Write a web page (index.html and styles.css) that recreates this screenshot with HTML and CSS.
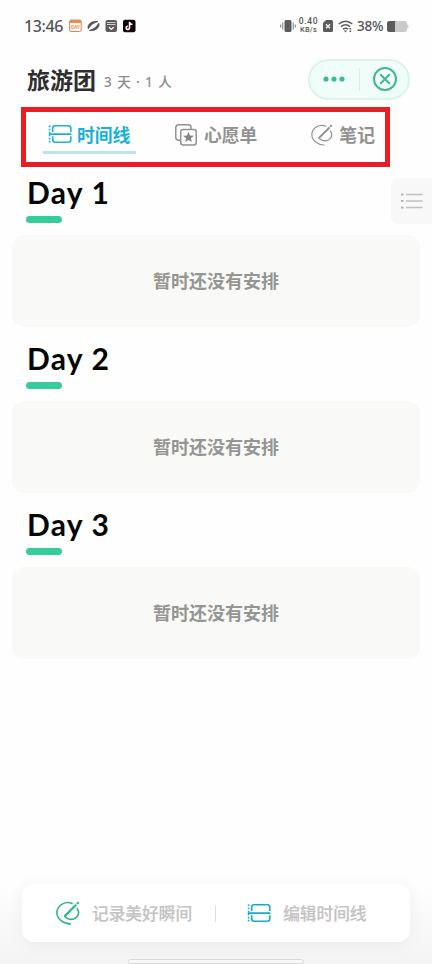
FILE: index.html
```html
<!DOCTYPE html>
<html lang="zh-CN">
<head>
<meta charset="utf-8">
<title>旅游团</title>
<link rel="stylesheet" href="styles.css">
</head>
<body>
<svg class="defs" width="0" height="0">
  <symbol id="timeline" viewBox="0 0 24 18">
    <g fill="none" stroke="currentColor" stroke-width="1.6">
      <path d="M4.700 7V3.200Q4.700.8 7.100.8h13.300q2.400 0 2.400 2.400V7M4.700 11.200v3.600q0 2.400 2.400 2.400h13.300q2.400 0 2.400-2.400v-3.600M.8 9.100h22.700"/>
      <path d="M1.600.6v16.800" stroke-width="1.600" stroke-dasharray="1.600 1.450"/>
    </g>
  </symbol>
  <symbol id="note" viewBox="0 0 24 24">
    <g fill="none" stroke="currentColor" stroke-linecap="round">
      <path d="M16.100 2.400C9.800-.2 1.100 3.800.9 11.500.8 18 7.600 22.900 14.300 22.900M21.200 7.600C25.800 15.200 17 21.600 9.600 16.300"/>
      <path d="M8.800 15.100L19.600 4.300" stroke-width="2.200"/>
      <path d="M21.700 2.200l.2-.2" stroke-width="2.400"/>
    </g>
  </symbol>
</svg>

<header class="status">
  <span class="clock">13:46</span>
  <svg class="status-apps" width="68" height="14" viewBox="0 0 68 14">
    <rect x=".6" y="1" width="11.600" height="11.500" rx="1.500" fill="#fff8f0" stroke="#d9865f"/>
    <path d="M.6 4V2.500Q.6 1 2 1h8.800q1.400 0 1.400 1.500V4z" fill="#ec8c50"/>
    <text class="cal-text" x="6.400" y="10.300" text-anchor="middle">DAY</text>
    <g fill="none" stroke="#555">
      <path d="M19.300 9.800C17.800 5.500 23 1.500 28.800 2.600C25 3.200 21.500 6 19.300 9.800z" stroke-width="1" fill="#555"/>
      <path d="M29.800 4.200C31.300 8.500 26 12.500 20.400 11.400C24.200 10.800 27.600 8 29.800 4.200z" stroke-width="1" fill="#555"/>
    </g>
    <rect x="36.500" y="1" width="11.500" height="12" rx="2" fill="#5c5c5c"/>
    <path d="M38 3.500h8.500M38 5.500h8.500" stroke="#ddd" stroke-width=".9"/>
    <path d="M40 8.200l2.300 2 2.500-2" fill="none" stroke="#fff" stroke-width="1.300"/>
    <rect x="54" y=".8" width="12.500" height="12.500" rx="2" fill="#080808"/>
    <path d="M60.800 3v6a1.700 1.700 0 1 1-1.700-1.700M60.800 3.200q.5 2.300 2.800 2.500" fill="none" stroke="#e8556c" stroke-width="1.500"/>
    <path d="M60.400 2.800v6a1.700 1.700 0 1 1-1.700-1.700M60.400 3q.5 2.300 2.800 2.500" fill="none" stroke="#fff" stroke-width="1.300"/>
  </svg>
  <div class="status-right">
    <svg width="16" height="14" viewBox="0 0 16 14">
      <rect x="4.500" y="1" width="7" height="12" rx="1.500" fill="#5c5c5c"/>
      <path d="M2.800 3.500v7M13.200 3.500v7M.7 5.500v3M15.300 5.500v3" stroke="#777"/>
    </svg>
    <span class="speed"><b>0.40</b><b class="unit">KB/s</b></span>
    <svg class="sim" width="10" height="12" viewBox="0 0 10 12">
      <path d="M3 0h5.500Q10 0 10 1.500v9Q10 12 8.500 12h-7Q0 12 0 10.500V3z" fill="#5c5c5c"/>
      <path d="M3 4.200l4 4M7 4.200l-4 4" stroke="#fff" stroke-width="1.300"/>
    </svg>
    <svg class="wifi" width="15" height="13" viewBox="0 0 15 13">
      <path d="M.7 4Q7.500-1.500 14.300 4M2.900 6.700q4.600-3.700 9.200 0M5 9.200q2.500-1.800 5 0" fill="none" stroke="#5c5c5c" stroke-width="1.500"/>
      <path d="M5.900 10.600h3.200L7.500 12.500zM11.500 8h1.700v1.500h-1.700zM11.500 10.500h1.700V12h-1.700z" fill="#5c5c5c"/>
    </svg>
    <span class="percent">38%</span>
    <svg class="battery" width="22" height="11" viewBox="0 0 22 11">
      <rect width="20" height="11" rx="2.500" fill="#cacaca"/>
      <path d="M8 0H2.500Q0 0 0 2.500v6Q0 11 2.500 11H8z" fill="#5c5c5c"/>
      <path d="M20.500 4h.5v3h-.5z" stroke="#cacaca" fill="none"/>
    </svg>
  </div>
</header>

<section class="title-row">
  <h1>旅游团</h1>
  <span class="summary">3 天 · 1 人</span>
  <div class="capsule">
    <svg width="22" height="6" viewBox="0 0 22 6" fill="#39bd8e"><circle cx="3" cy="3" r="2.600"/><circle cx="11" cy="3" r="2.600"/><circle cx="19" cy="3" r="2.600"/></svg>
    <i class="capsule-line"></i>
    <svg width="26" height="26" viewBox="0 0 26 26" fill="none" stroke="#3fb98e" stroke-width="2"><circle cx="13" cy="13" r="11"/><path d="M8.800 8.800l8.400 8.400M17.200 8.800l-8.400 8.400" stroke-linecap="round"/></svg>
  </div>
</section>

<nav class="tabs">
  <a class="tab active"><svg class="icon-timeline"><use href="#timeline"/></svg><span>时间线</span></a>
  <a class="tab wish">
    <svg width="22" height="22" viewBox="0 0 22 22" fill="none" stroke="#929292" stroke-width="1.500">
      <path d="M5.300 16.200H3.500Q.8 16.200.8 13.500v-10Q.8.8 3.500.8h9.800Q16 .8 16 3.500v1.400"/>
      <rect x="5.700" y="5.400" width="15.500" height="15.700" rx="2.500"/>
      <path d="M13.500 7.800l1.500 3.700 4 .2-3.100 2.500 1 3.900-3.400-2.200-3.400 2.200 1-3.900L8 11.700l4-.2z" fill="#858585" stroke="none"/>
    </svg><span>心愿单</span>
  </a>
  <a class="tab notes"><svg class="icon-note"><use href="#note"/></svg><span>笔记</span></a>
</nav>

<main class="days">
  <button class="side-menu" aria-label="目录">
    <svg width="22" height="16" viewBox="0 0 22 16"><path d="M0 1.500h2.500M0 8h2.500M0 14.500h2.500" stroke="#b4b4b4" stroke-width="2"/><path d="M5 1.500h16.500M5 8h16.500M5 14.500h16.500" stroke="#bfbfbf" stroke-width="1.700"/></svg>
  </button>
  <section class="day"><h2>Day 1</h2><i class="accent"></i><div class="empty"><span>暂时还没有安排</span></div></section>
  <section class="day"><h2>Day 2</h2><i class="accent"></i><div class="empty"><span>暂时还没有安排</span></div></section>
  <section class="day"><h2>Day 3</h2><i class="accent"></i><div class="empty"><span>暂时还没有安排</span></div></section>
</main>

<footer class="dock">
  <div class="actions">
    <a class="record"><svg class="icon-note"><use href="#note"/></svg><span>记录美好瞬间</span></a>
    <i class="divider"></i>
    <a class="edit"><svg class="icon-timeline"><use href="#timeline"/></svg><span>编辑时间线</span></a>
  </div>
  <div class="home-bar"></div>
</footer>
</body>
</html>
```
FILE: styles.css
```css
* { box-sizing: border-box; }
body {
  margin: 0;
  width: 432px;
  height: 964px;
  overflow: hidden;
  display: flex;
  flex-direction: column;
  background: #fefefe;
  font-family: "Noto Sans", "Noto Sans CJK SC", sans-serif;
}
h1, h2 { margin: 0; }
svg { display: block; flex: none; }
.defs { position: absolute; }

.status {
  height: 52px;
  flex: none;
  display: flex;
  align-items: center;
  padding: 0 23px 0 24px;
  color: #555;
}
.clock { width: 45px; font: 500 16px/20px "Noto Sans", sans-serif; letter-spacing: -.4px; white-space: nowrap; }
.cal-text { font: bold 4.500px "Noto Sans", sans-serif; fill: #e69a58; }
.status-right { margin-left: auto; display: flex; align-items: center; }
.speed { display: flex; flex-direction: column; width: 21px; margin-left: 2px; align-items: center; padding-bottom: 1px; }
.speed b { font: 500 8.500px/9px Roboto, "Noto Sans", sans-serif; letter-spacing: .6px; white-space: nowrap; }
.speed .unit { font-size: 7.500px; line-height: 8px; letter-spacing: .2px; }
.sim { margin-left: 4px; }
.wifi { margin-left: 5px; }
.percent { width: 27px; margin: 0 3px 0 4px; font: 500 13.500px/18px "Noto Sans", sans-serif; letter-spacing: -.2px; }

.title-row { height: 55px; flex: none; display: flex; align-items: center; padding: 0 22px 0 27px; }
h1 { font: bold 23px/32px "Noto Sans CJK SC", sans-serif; color: #2e2e2e; width: 77px; white-space: nowrap; padding-bottom: 2px; }
.summary { font: 500 13.500px/20px "Noto Sans", "Noto Sans CJK SC", sans-serif; color: #8c8c8c; padding-top: 5px; letter-spacing: .95px; white-space: nowrap; }
.capsule {
  margin-left: auto;
  width: 102px;
  height: 41px;
  border: 2px solid #d7f6eb;
  border-radius: 21px;
  background: #f0fdf9;
  display: flex;
  align-items: center;
  padding: 0 0 1px 13px;
}
.capsule-line { width: 1px; height: 23px; margin: 0 12px 0 14px; background: #d7ede5; }

.tabs {
  width: 369px;
  height: 60px;
  flex: none;
  margin-left: 21px;
  border: 5px solid #eb1c24;
  display: flex;
  padding: 0 0 0 17px;
}
.tab { display: flex; align-items: center; height: 45px; color: #929292; font: bold 17.800px/24px "Noto Sans CJK SC", sans-serif; }
.tab span { white-space: nowrap; padding-bottom: 2px; }
.active { width: 93px; color: #18b1d8; padding: 5px 0 0 5px; gap: 5px; border-bottom: 3px solid #b9e5f3; height: 42px; }
.active span { padding-bottom: 1px; }
.wish { margin-left: 39px; gap: 7px; }
.notes { margin-left: 54px; gap: 6px; }
.icon-timeline { width: 24px; height: 18px; }
.icon-note { width: 22px; height: 22px; stroke-width: 1.300px; }

.days { position: relative; padding: 0 12px; flex: 1; }
.side-menu {
  position: absolute;
  right: 0;
  top: 11px;
  width: 41px;
  height: 46px;
  border: 0;
  border-radius: 7px 0 0 7px;
  background: #f8f8f8;
  padding: 0 0 0 10px;
}
.day { height: 166px; padding-top: 7px; }
h2 { padding-left: 15px; font: bold 30px/36px Lato, sans-serif; color: #060606; letter-spacing: 1.200px; }
.accent { display: block; width: 36px; height: 7px; margin: 6px 0 12px 14px; border-radius: 4px; background: #36cd9a; }
.empty {
  height: 92px;
  border-radius: 12px;
  background: #f9f9f7;
  display: flex;
  align-items: center;
  justify-content: center;
  font: bold 18px/24px "Noto Sans CJK SC", sans-serif;
  color: #959593;
}
.empty span { padding-bottom: 2px; }

.dock { height: 80px; flex: none; background: linear-gradient(#fefefe, #f4f4f4); padding: 0 22px; }
.actions {
  height: 58px;
  border-radius: 12px;
  background: #fff;
  box-shadow: 0 3px 20px rgba(0, 0, 0, .055);
  display: flex;
  align-items: center;
  padding-left: 34px;
}
.record, .edit { display: flex; align-items: center; font: 500 16.700px/24px "Noto Sans CJK SC", sans-serif; color: #c5c3c4; white-space: nowrap; -webkit-text-stroke: .2px; }
.record svg { width: 24px; height: 24px; color: #2bb88a; }
.record .icon-note { stroke-width: 1.600px; }
.record { gap: 12px; }
.edit { gap: 12px; }
.edit svg { color: #1baac5; }
.divider { width: 1px; height: 17px; margin: 0 31px 0 23px; background: #dedede; }
.home-bar { width: 176px; height: 5px; margin: 17px auto 0; border: 1px solid #d9d9d9; border-radius: 3px; background: #f7f7f7; }
```
